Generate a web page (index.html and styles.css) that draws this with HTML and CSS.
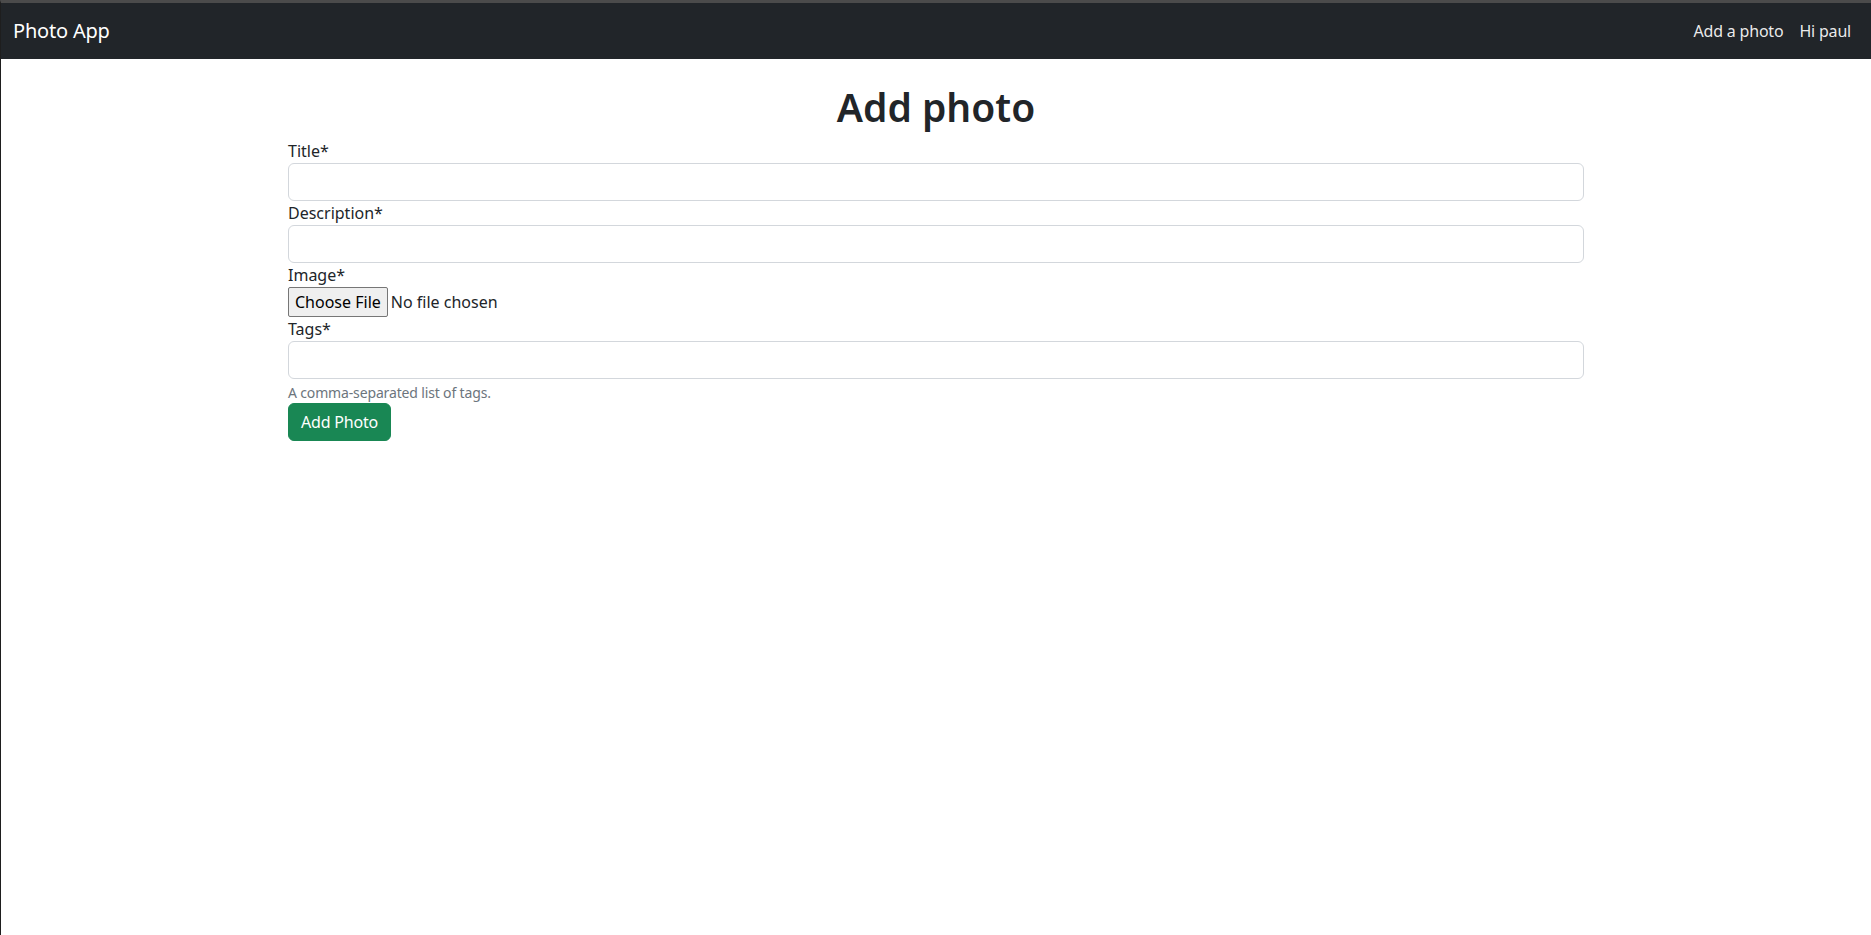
FILE: index.html
```html
<!DOCTYPE html>
<html lang="en">
<head>
<meta charset="utf-8">
<title>Photo App</title>
<link rel="stylesheet" href="styles.css">
</head>
<body>
<div class="window">
  <nav class="navbar">
    <a class="brand" href="#">Photo App</a>
    <div class="nav-links">
      <a class="nav-link" href="#">Add a photo</a>
      <a class="nav-link" href="#">Hi paul</a>
    </div>
  </nav>
  <main class="container">
    <h1 class="page-title">Add photo</h1>
    <form class="form">
      <label class="form-label" for="title">Title*</label>
      <input class="form-control" id="title" type="text">
      <label class="form-label" for="description">Description*</label>
      <input class="form-control" id="description" type="text">
      <label class="form-label" for="image">Image*</label>
      <input class="file-input" id="image" type="file">
      <label class="form-label" for="tags">Tags*</label>
      <input class="form-control" id="tags" type="text">
      <div class="form-text">A comma-separated list of tags.</div>
      <div class="actions">
        <button class="btn-success" type="submit">Add Photo</button>
      </div>
    </form>
  </main>
</div>
</body>
</html>
```
FILE: styles.css
```css
html, body {
  margin: 0;
  padding: 0;
  height: 100%;
}
body {
  font-family: "Noto Sans", "Open Sans", sans-serif;
  font-size: 16px;
  line-height: 1.5;
  color: #212529;
  background: #fff;
}
.window {
  box-sizing: border-box;
  min-height: 100%;
  border-top: 3px solid #4b4b4b;
  border-left: 1px solid #1e1e1e;
}
.navbar {
  height: 56px;
  background: #212529;
  display: flex;
  align-items: center;
  justify-content: space-between;
  padding: 0 12px;
}
.brand {
  color: #fff;
  text-decoration: none;
  font-size: 20px;
  line-height: 30px;
  letter-spacing: -0.2px;
}
.nav-links {
  display: flex;
}
.nav-link {
  color: rgba(255, 255, 255, 0.92);
  text-decoration: none;
  padding: 8px;
  font-size: 16px;
  letter-spacing: -0.2px;
}
.container {
  max-width: 1296px;
  margin: 0 auto;
  padding: 0 12px;
}
.page-title {
  margin: 24px 0 8px;
  font-size: 39px;
  line-height: 48px;
  font-weight: 600;
  text-align: center;
}
.form {
  display: flex;
  flex-direction: column;
  align-items: stretch;
}
.form-label {
  display: block;
  line-height: 24px;
}
.form-control {
  box-sizing: border-box;
  height: 38px;
  width: 100%;
  border: 1px solid #d3d7dc;
  border-radius: 6px;
  padding: 6px 12px;
  font: inherit;
  margin: 0;
}
.file-input {
  align-self: flex-start;
  height: 30px;
  font-family: inherit;
  font-size: 16px;
  line-height: 30px;
  margin: 0;
}
.file-input::file-selector-button {
  box-sizing: border-box;
  height: 30px;
  font-family: inherit;
  font-size: 16px;
  padding: 0 6px;
  margin-right: 3px;
  border: 1px solid #767676;
  border-radius: 2px;
  background: #efefef;
  color: #000;
}
.form-text {
  margin-top: 4px;
  font-size: 14px;
  line-height: 20px;
  color: #6c757d;
  letter-spacing: -0.15px;
}
.actions {
  display: flex;
}
.btn-success {
  height: 38px;
  padding: 6px 12px;
  background: #198754;
  color: #fff;
  border: 1px solid #198754;
  border-radius: 6px;
  font: inherit;
  letter-spacing: -0.2px;
  cursor: pointer;
}
```
